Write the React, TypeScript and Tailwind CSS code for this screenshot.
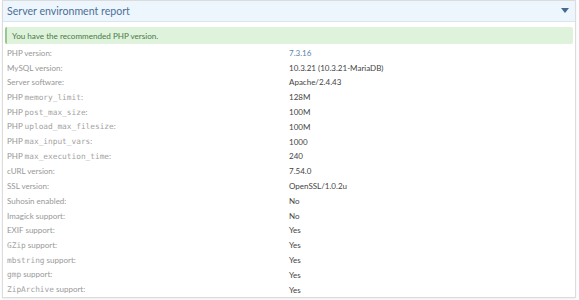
import React from "react";

const M = ({ children }: { children: React.ReactNode }) => (
  <span className="font-['DejaVu_Sans_Mono',monospace] text-[7.8px] text-[#a3a3a3]">{children}</span>
);

const rows: [React.ReactNode, React.ReactNode, boolean?][] = [
  ["PHP version:", "7.3.16", true],
  ["MySQL version:", "10.3.21 (10.3.21-MariaDB)"],
  ["Server software:", "Apache/2.4.43"],
  [<>PHP <M>memory_limit</M>:</>, "128M"],
  [<>PHP <M>post_max_size</M>:</>, "100M"],
  [<>PHP <M>upload_max_filesize</M>:</>, "100M"],
  [<>PHP <M>max_input_vars</M>:</>, "1000"],
  [<>PHP <M>max_execution_time</M>:</>, "240"],
  ["cURL version:", "7.54.0"],
  ["SSL version:", "OpenSSL/1.0.2u"],
  ["Suhosin enabled:", "No"],
  ["Imagick support:", "No"],
  ["EXIF support:", "Yes"],
  [<><M>GZip</M> support:</>, "Yes"],
  [<><M>mbstring</M> support:</>, "Yes"],
  [<><M>gmp</M> support:</>, "Yes"],
  [<><M>ZipArchive</M> support:</>, "Yes"],
];

export default function App() {
  return (
    <div className="w-[579px] h-[300px] bg-white font-['Lato',sans-serif] px-[2px]">
      <div className="w-[574px] h-[298px] border border-[#dcdcdc] shadow-[0_1px_2px_rgba(0,0,0,0.08)] flex flex-col">
        <div className="h-[21px] bg-[#eef6fd] border-b border-[#dbe5ee] flex items-center justify-between pl-[4px] pr-[6px]">
          <span className="text-[10.6px] text-[#4b6f96] leading-none">Server environment report</span>
          <svg width="8" height="5" viewBox="0 0 8 5"><path d="M0 0h8L4 5z" fill="#47698f" /></svg>
        </div>
        <div className="mx-[2px] mt-[5px] h-[18px] bg-[#dff2dc] border-l-2 border-[#96c98e] rounded-[2px] flex items-center pl-[5px]">
          <span className="text-[8.1px] text-[#4b7a45] leading-none">You have the recommended PHP version.</span>
        </div>
        <div className="flex flex-col pt-[1px]">
          {rows.map(([l, v, blue], i) => (
            <div key={i} className="flex h-[14.8px] items-center text-[8px] leading-none">
              <div className="w-[286px] pl-[4px] text-[#979797]">{l}</div>
              <div className={blue ? "text-[#5b82ad]" : "text-[#444]"}>{v}</div>
            </div>
          ))}
        </div>
      </div>
    </div>
  );
}
